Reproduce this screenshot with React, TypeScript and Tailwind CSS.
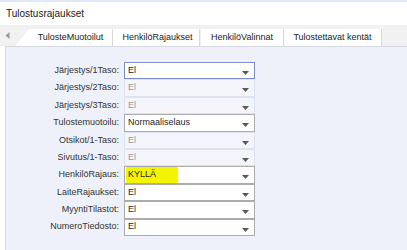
import React from "react";

type Row = { label: string; value: string; state: "focus" | "on" | "off"; hl?: boolean };

const rows: Row[] = [
  { label: "Järjestys/1Taso:", value: "El", state: "focus" },
  { label: "Järjestys/2Taso:", value: "El", state: "off" },
  { label: "Järjestys/3Taso:", value: "El", state: "off" },
  { label: "Tulostemuotoilu:", value: "Normaaliselaus", state: "on" },
  { label: "Otsikot/1-Taso:", value: "El", state: "off" },
  { label: "Sivutus/1-Taso:", value: "El", state: "off" },
  { label: "HenkilöRajaus:", value: "KYLLÄ", state: "on", hl: true },
  { label: "LaiteRajaukset:", value: "El", state: "on" },
  { label: "MyyntiTilastot:", value: "El", state: "on" },
  { label: "NumeroTiedosto:", value: "El", state: "on" },
];

function Arrow() {
  return (
    <svg width="7" height="4" viewBox="0 0 7 4" className="absolute right-[5px] top-[8px]">
      <path d="M0 0 H7 L3.5 4 Z" fill="#5a5a5a" />
    </svg>
  );
}

function Select({ r }: { r: Row }) {
  const box =
    r.state === "focus"
      ? "border-[#7d8cc4] bg-white text-[#1e1e1e]"
      : r.state === "on"
      ? "border-[#acacac] bg-white text-[#1e1e1e]"
      : "border-[#dde2ef] bg-[#f3f5fb] text-[#9a9a9a]";
  return (
    <div className={`relative w-[131px] h-full border ${box} flex items-center pl-[3px]`}>
      {r.hl ? (
        <span className="bg-[#f5f400] h-full flex items-center pl-[2px] pr-[22px] -ml-[2px] rounded-[1px]">
          {r.value}
        </span>
      ) : (
        <span>{r.value}</span>
      )}
      <Arrow />
    </div>
  );
}

export default function App() {
  return (
    <div
      className="w-[407px] h-[250px] overflow-hidden bg-white relative"
      style={{ fontFamily: '"Liberation Sans", Arial, sans-serif' }}
    >
      <div className="h-[2px] bg-[#dde9f6]" />
      <div className="h-[23px] flex items-center pl-[6px] text-[10px] text-[#1a1a1a]">Tulostusrajaukset</div>
      <div className="h-[21px] bg-[#f1f1f1] flex items-end relative text-[9px] text-[#222]">
        <svg width="5" height="7" viewBox="0 0 5 7" className="absolute left-[5px] top-[7px]">
          <path d="M4.5 0 V7 L0.5 3.5 Z" fill="#9a9a9a" />
        </svg>
        <div className="ml-[15px] h-[17px] w-[97px] bg-white [clip-path:polygon(0_100%,14px_0,100%_0,100%_100%)] flex items-center justify-center pl-[14px]">
          TulosteMuotoilut
        </div>
        <div className="h-[17px] w-[88px] bg-white border-l border-r border-[#d8d8d8] flex items-center justify-center pl-[3px]">
          HenkilöRajaukset
        </div>
        <div className="h-[17px] w-[83px] bg-white border-r border-[#d8d8d8] ml-[1px] flex items-center justify-center">
          HenkilöValinnat
        </div>
        <div className="h-[17px] w-[98px] bg-white border-r border-[#d8d8d8] flex items-center justify-center">
          Tulostettavat kentät
        </div>
      </div>
      <div className="ml-[5px] h-[204px] bg-[#eef1f9] border-l border-t border-[#d6d9e0] pt-[15px] text-[9px]">
        {rows.map((r) => (
          <div key={r.label} className="h-[17.4px] flex items-stretch">
            <div className="w-[118px] flex items-center justify-end text-[#333] pr-[5px]">{r.label}</div>
            <Select r={r} />
          </div>
        ))}
      </div>
    </div>
  );
}
